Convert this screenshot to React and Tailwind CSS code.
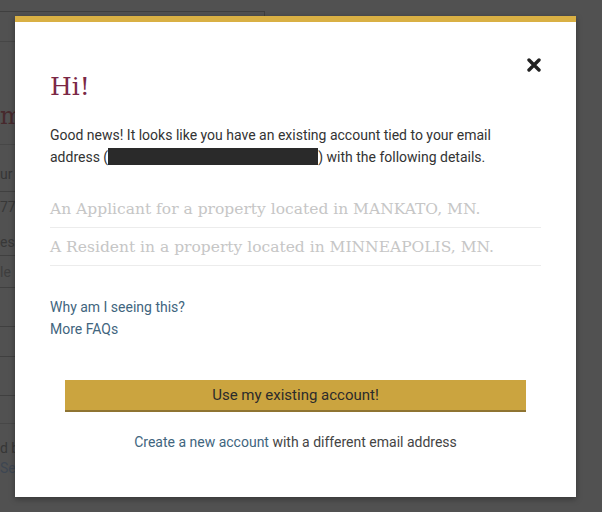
// Existing-account modal over a dimmed sign-up form
const sans = { fontFamily: 'Roboto, "Liberation Sans", sans-serif' };
const serif = { fontFamily: '"DejaVu Serif", "Liberation Serif", serif' };

function BackdropForm() {
  // the page behind the overlay, already darkened
  return (
    <div className="w-[265px] pt-[11px] whitespace-nowrap overflow-hidden" style={sans}>
      <div className="h-[30px] border-t border-r border-[#3f3f3f]" />
      <div className="border-t border-[#464646] h-[103px] pt-[62px]">
        <div className="text-[24px] leading-none text-[#47292d]" style={serif}>
          m
        </div>
      </div>
      <div className="border-t border-[#474747] h-[47px] pt-[22px] text-[14px] leading-none text-[#363636]">
        ur email address
      </div>
      <div className="border-t border-[#404040] h-[30px] pt-[8px] text-[14px] leading-none text-[#383838]">
        77
      </div>
      <div className="h-[34px] pt-[14px] text-[14px] leading-none text-[#383838]">ess</div>
      <div className="border-t border-[#404040] h-[32px] pt-[9px] text-[14px] leading-none text-[#3e3e3e]">
        le
      </div>
      <div className="border-t border-[#404040] h-[39px]" />
      <div className="border-t border-[#404040] h-[30px]" />
      <div className="border-t border-[#404040] h-[39px]" />
      <div className="border-t border-[#404040] h-[28px]" />
      <div className="border-t border-[#474747] pt-[14px] text-[14px] leading-[20px] text-[#363636]">
        <div>d by</div>
        <div className="text-[#3d4652]">Se</div>
      </div>
    </div>
  );
}

export default function App() {
  return (
    <div className="relative w-[602px] h-[512px] overflow-hidden bg-[#515151]">
      <BackdropForm />

      <div className="absolute left-[15px] top-[16px] w-[561px] h-[481px] bg-white border-t-[6px] border-[#d9b044] shadow-[0_2px_6px_rgba(0,0,0,0.35)] px-[35px] pt-[36px]">
        <div className="flex items-start justify-between">
          <h1 className="text-[25px] leading-none text-[#7b2846] pt-[16px]" style={serif}>
            Hi!
          </h1>
          <svg width="14" height="14" viewBox="0 0 14 14">
            <path d="M2 2 L12 12 M12 2 L2 12" stroke="#222" strokeWidth="3.4" strokeLinecap="round" />
          </svg>
        </div>

        <p className="mt-[25px] text-[14px] leading-[22px] text-[#333]" style={sans}>
          Good news! It looks like you have an existing account tied to your email
          <br />
          address (
          <span className="inline-block align-middle w-[210px] h-[17px] bg-[#2a2a2a] -mt-[3px]" />
          ) with the following details.
        </p>

        <ul className="mt-[22px] text-[15.5px] text-[#c6c6c6]" style={serif}>
          <li className="h-[38px] pt-[8px] border-b border-[#ececec]">
            An Applicant for a property located in MANKATO, MN.
          </li>
          <li className="h-[38px] pt-[8px] border-b border-[#ececec]">
            A Resident in a property located in MINNEAPOLIS, MN.
          </li>
        </ul>

        <div className="mt-[30px] flex flex-col text-[14px] leading-[22px] text-[#41657e]" style={sans}>
          <a>Why am I seeing this?</a>
          <a>More FAQs</a>
        </div>

        <div className="mt-[40px] px-[15px]">
          <button
            className="w-full h-[32px] bg-[#cba43f] border-b-2 border-[#8f7431] text-[15px] text-[#2b2b2b]"
            style={sans}
          >
            Use my existing account!
          </button>
        </div>

        <p className="mt-[20px] text-center text-[14px] text-[#444]" style={sans}>
          <span className="text-[#41657e]">Create a new account</span> with a different email address
        </p>
      </div>
    </div>
  );
}
